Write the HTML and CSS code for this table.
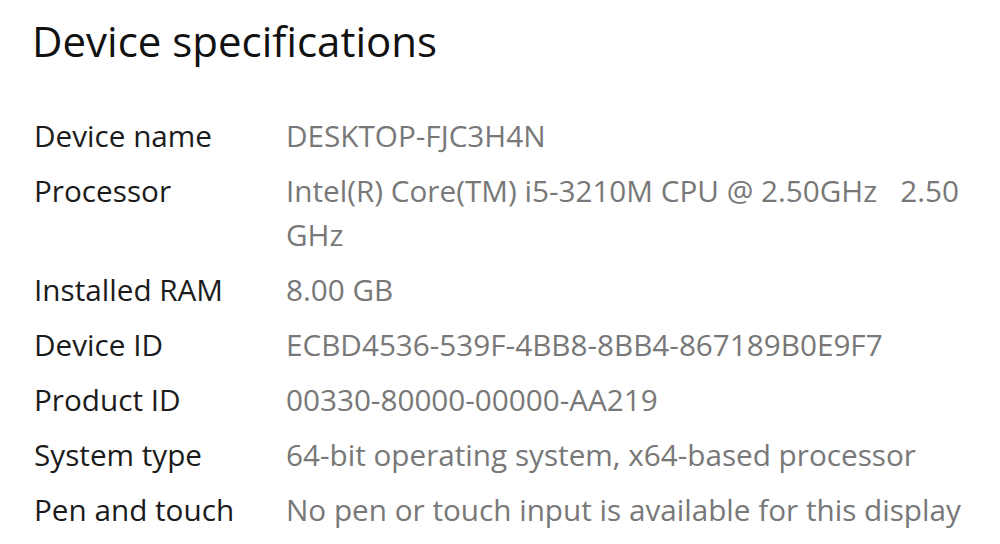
FILE: index.html
```html
<!DOCTYPE html>
<html>
<head>
<meta charset="utf-8">
<link rel="stylesheet" href="styles.css">
</head>
<body>
<main class="page">
  <h1 class="title">Device specifications</h1>
  <dl class="specs">
    <dt>Device name</dt><dd>DESKTOP-FJC3H4N</dd>
    <dt>Processor</dt><dd>Intel(R) Core(TM) i5-3210M CPU @ 2.50GHz&nbsp;&nbsp; 2.50<br>GHz</dd>
    <dt>Installed RAM</dt><dd>8.00 GB</dd>
    <dt>Device ID</dt><dd>ECBD4536-539F-4BB8-8BB4-867189B0E9F7</dd>
    <dt>Product ID</dt><dd>00330-80000-00000-AA219</dd>
    <dt>System type</dt><dd>64-bit operating system, x64-based processor</dd>
    <dt>Pen and touch</dt><dd>No pen or touch input is available for this display</dd>
  </dl>
</main>
</body>
</html>
```

FILE: styles.css
```css
html, body {
  margin: 0;
  padding: 0;
  background: #ffffff;
}
.page {
  font-family: "Open Sans", "Noto Sans", sans-serif;
  padding: 12px 0 0 32px;
}
.title {
  margin: 0;
  font-weight: 400;
  font-size: 42px;
  line-height: 58px;
  color: #111111;
}
.specs {
  margin: 44px 0 0 2px;
  display: grid;
  grid-template-columns: 252px 1fr;
  row-gap: 11px;
  font-size: 29.7px;
  line-height: 44px;
}
.specs dt {
  color: #1b1b1b;
}
.specs dd {
  margin: 0;
  color: #787878;
}
```
